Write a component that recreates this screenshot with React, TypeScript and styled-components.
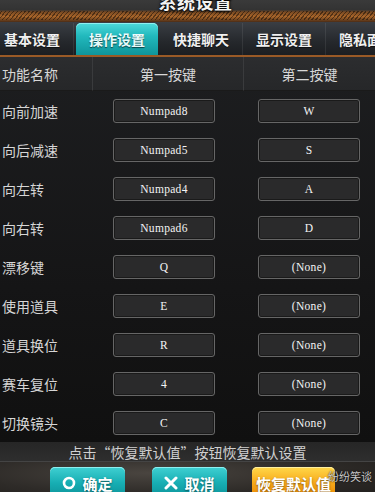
import React from 'react';
import styled, { createGlobalStyle } from 'styled-components';

const GlobalStyle = createGlobalStyle`
  html, body {
    margin: 0;
    padding: 0;
    background: #111;
  }
  body {
    font-family: "Noto Sans CJK SC", "Liberation Sans", sans-serif;
  }
`;

const Screen = styled.div`
  position: relative;
  width: 375px;
  height: 492px;
  overflow: hidden;
  display: flex;
  flex-direction: column;
  background: #141414;
`;

const TitleBar = styled.div`
  height: 22px;
  flex: none;
  position: relative;
  display: flex;
  justify-content: center;
  align-items: flex-end;
  background:
    repeating-linear-gradient(-50deg, rgba(0,0,0,0.45) 0 1px, transparent 1px 3px) 0 11px / 100% 9px no-repeat,
    linear-gradient(180deg, #3a3a3a 0%, #333 45%, #7a4a22 55%, #a8652a 75%, #4a2c16 100%);
`;

const Title = styled.div`
  position: relative;
  top: -8px;
  left: 8px;
  font-size: 18px;
  font-weight: 700;
  color: #f2f2f2;
  letter-spacing: 0.5px;
  text-shadow: 0 1px 2px #000, 0 0 3px #000;
`;

const TabRow = styled.div`
  height: 33px;
  flex: none;
  display: flex;
  align-items: flex-end;
  background: linear-gradient(180deg, #3a3e44 0%, #25282c 60%, #1c1e21 100%);
  border-bottom: 2px solid #9a5a26;
  overflow: hidden;
`;

const TabStrip = styled.div`
  display: flex;
  margin-left: -9px;
  height: 32px;
`;

const Tab = styled.div<{ $active?: boolean }>`
  width: 82px;
  flex: none;
  display: flex;
  align-items: center;
  justify-content: center;
  font-size: 14px;
  font-weight: 700;
  color: ${p => (p.$active ? '#e8fbfb' : '#f0f0f0')};
  border-radius: ${p => (p.$active ? '5px 5px 0 0' : '0')};
  background: ${p =>
    p.$active ? 'linear-gradient(180deg, #4fdadb 0%, #22b9bd 40%, #0f959b 100%)' : 'transparent'};
  box-shadow: ${p => (p.$active ? 'inset 0 1px 0 #8ff0f0' : 'none')};
  border-right: ${p => (p.$active ? 'none' : '1px solid rgba(255,255,255,0.08)')};
  margin: ${p => (p.$active ? '0 2px' : '0')};
  text-shadow: 0 1px 1px rgba(0,0,0,0.6);
`;

const Table = styled.div`
  flex: none;
  display: grid;
  grid-template-columns: 92px 151px 132px;
  grid-auto-rows: 39px;
  grid-template-rows: 34px;
  background: linear-gradient(180deg, #1d1e20 0%, #151516 60%, #101010 100%);
`;

const HeadCell = styled.div<{ $center?: boolean; $sep?: boolean }>`
  display: flex;
  align-items: center;
  justify-content: ${p => (p.$center ? 'center' : 'flex-start')};
  padding-left: ${p => (p.$center ? '0' : '2px')};
  font-size: 14px;
  color: #d8d8d8;
  background: linear-gradient(180deg, #2c2d2f 0%, #262729 100%);
  border-left: ${p => (p.$sep ? '1px solid #3a3b3d' : 'none')};
  border-bottom: 1px solid #1a1a1a;
`;

const Label = styled.div`
  display: flex;
  align-items: center;
  padding-left: 2px;
  font-size: 14px;
  color: #d6d6d6;
`;

const KeyCell = styled.div<{ $offset: number }>`
  display: flex;
  align-items: center;
  justify-content: flex-start;
  padding-left: ${p => p.$offset}px;
`;

const KeyBox = styled.div`
  width: 100px;
  height: 22px;
  display: flex;
  align-items: center;
  justify-content: center;
  background: #2a2a2b;
  border: 1px solid #666;
  border-radius: 3px;
  box-shadow: inset 0 0 0 1px #1a1a1a;
  font-family: "Liberation Serif", "DejaVu Serif", serif;
  font-size: 11.5px;
  color: #f4f4f4;
  letter-spacing: 0.3px;
`;

const Hint = styled.div`
  height: 19px;
  flex: none;
  display: flex;
  justify-content: center;
  align-items: center;
  font-size: 14px;
  color: #d0d0d0;
  background: linear-gradient(180deg, #262626 0%, #2e2e2e 100%);
  border-bottom: 1px solid #444;
`;

const BottomBar = styled.div`
  flex: 1;
  display: flex;
  align-items: flex-start;
  padding-top: 5px;
  background: radial-gradient(ellipse at 40% 30%, #4a4540 0%, #2e2b28 55%, #1f1d1b 100%);
`;

const Button = styled.div<{ $orange?: boolean; $left: number; $width: number }>`
  margin-left: ${p => p.$left}px;
  width: ${p => p.$width}px;
  height: 32px;
  flex: none;
  display: flex;
  align-items: center;
  justify-content: center;
  gap: 6px;
  border-radius: 5px;
  font-size: 15px;
  font-weight: 700;
  color: #fff;
  text-shadow: 0 1px 2px rgba(0,0,0,0.5);
  background: ${p =>
    p.$orange
      ? 'linear-gradient(180deg, #ffd84a 0%, #f7a91a 50%, #e88300 100%)'
      : 'linear-gradient(180deg, #3fd0d2 0%, #17aeb3 50%, #0c8f96 100%)'};
  box-shadow: ${p => (p.$orange ? 'inset 0 1px 0 #fff0a0' : 'inset 0 1px 0 #8ef0f0')};
`;

const Watermark = styled.div`
  position: absolute;
  right: 3px;
  bottom: 8px;
  font-size: 11px;
  color: #c9c9c9;
  text-shadow: 0 0 2px #000;
`;

const rows: [string, string, string][] = [
  ['向前加速', 'Numpad8', 'W'],
  ['向后减速', 'Numpad5', 'S'],
  ['向左转', 'Numpad4', 'A'],
  ['向右转', 'Numpad6', 'D'],
  ['漂移键', 'Q', '(None)'],
  ['使用道具', 'E', '(None)'],
  ['道具换位', 'R', '(None)'],
  ['赛车复位', '4', '(None)'],
  ['切换镜头', 'C', '(None)'],
];

const tabs = ['基本设置', '操作设置', '快捷聊天', '显示设置', '隐私面板'];

const App: React.FC = () => {
  return (
    <>
      <GlobalStyle />
      <Screen>
        <TitleBar>
          <Title>系统设置</Title>
        </TitleBar>
        <TabRow>
          <TabStrip>
            {tabs.map(t => (
              <Tab key={t} $active={t === '操作设置'}>{t}</Tab>
            ))}
          </TabStrip>
        </TabRow>
        <Table>
          <HeadCell>功能名称</HeadCell>
          <HeadCell $center $sep>第一按键</HeadCell>
          <HeadCell $center $sep>第二按键</HeadCell>
          {rows.map(([name, first, second]) => (
            <React.Fragment key={name}>
              <Label>{name}</Label>
              <KeyCell $offset={21}><KeyBox>{first}</KeyBox></KeyCell>
              <KeyCell $offset={15}><KeyBox>{second}</KeyBox></KeyCell>
            </React.Fragment>
          ))}
        </Table>
        <Hint>点击“恢复默认值”按钮恢复默认设置</Hint>
        <BottomBar>
          <Button $left={50} $width={75}>
            <svg width="14" height="14" viewBox="0 0 14 14">
              <circle cx="7" cy="7" r="5" fill="none" stroke="#fff" strokeWidth="2.6" />
            </svg>
            确定
          </Button>
          <Button $left={27} $width={75}>
            <svg width="14" height="14" viewBox="0 0 14 14">
              <path d="M2 2 L12 12 M12 2 L2 12" stroke="#fff" strokeWidth="3" strokeLinecap="round" />
            </svg>
            取消
          </Button>
          <Button $left={25} $width={83} $orange>恢复默认值</Button>
        </BottomBar>
        <Watermark>纷纷笑谈</Watermark>
      </Screen>
    </>
  );
};

export default App;
